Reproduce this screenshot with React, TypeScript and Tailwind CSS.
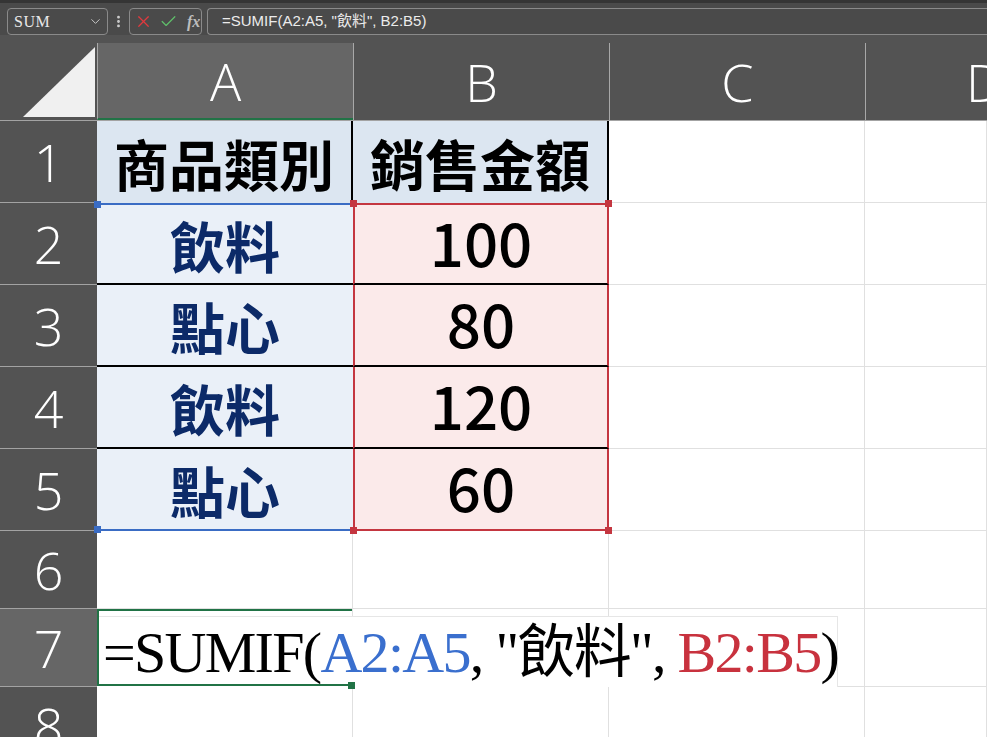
import React from 'react'
import { ChevronDown, EllipsisVertical, X, Check } from 'lucide-react'

const COLS = ['A', 'B', 'C', 'D']
const ROW_H = [82, 82, 82, 82, 82, 78, 78, 78]

const cjk = "font-['Noto_Sans_CJK_TC','Noto_Sans',sans-serif]"
const head = "font-['Open_Sans','Noto_Sans',sans-serif] font-light text-white text-[52px]"

function FormulaBar() {
  return (
    <div className="bg-[#4a4a4a]">
      <div className="h-[3px] bg-[#353535]" />
      <div className="flex items-center h-[32px] pt-[5px] gap-0">
        <div className="ml-[7px] w-[101px] h-[27px] rounded-[4px] border border-[#8a8a8a] flex items-center justify-between pl-[6px] pr-[4px]">
          <span className="font-['Liberation_Serif',serif] text-[16px] text-[#e8e8e8] tracking-[0.5px]">SUM</span>
          <ChevronDown size={15} strokeWidth={1.5} className="text-[#cfcfcf]" />
        </div>
        <div className="w-[21px] flex justify-center">
          <EllipsisVertical size={15} strokeWidth={2.5} className="text-[#d0d0d0]" />
        </div>
        <div className="w-[73px] h-[27px] rounded-[4px] border border-[#8a8a8a] flex items-center gap-[6px] pl-[4px]">
          <X size={19} strokeWidth={1.5} className="text-[#e0393e]" />
          <Check size={19} strokeWidth={1.5} className="text-[#5fbf6a]" />
          <span className="font-['Liberation_Serif',serif] italic font-bold text-[16px] text-[#bdbdbd] ml-[3px]">fx</span>
        </div>
        <div className="ml-[5px] flex-1 h-[27px] rounded-l-[4px] border border-r-0 border-[#8a8a8a] flex items-center pl-[14px]">
          <span className="font-['Liberation_Sans','Noto_Sans_CJK_TC',sans-serif] text-[15px] text-[#ececec]">
            =SUMIF(A2:A5, "飲料", B2:B5)
          </span>
        </div>
      </div>
    </div>
  )
}

function HeaderRow() {
  return (
    <div className="flex h-[86px] bg-[#535353] border-b border-[#a3a3a3]">
      <div className="w-[97px] shrink-0 relative">
        <svg width="97" height="86" className="block">
          <polygon points="23,82 95,82 95,12" fill="#f0f0f0" />
        </svg>
      </div>
      {COLS.map((c, i) => (
        <div key={c} className={`pt-[8px] ${i < 3 ? 'w-[256px] shrink-0' : 'flex-1'}`}>
          <div
            className={`h-full border-l border-[#a8a8a8] flex items-center justify-center ${head} ${
              c === 'A' ? 'bg-[#666666] border-b-2 border-b-[#217346]' : ''
            } ${c === 'D' ? 'justify-start pl-[100px]' : ''}`}
          >
            {c}
          </div>
        </div>
      ))}
    </div>
  )
}

function Square({ cls }: { cls: string }) {
  return <span className={`absolute w-[7px] h-[7px] z-30 ${cls}`} />
}

function Cell({
  w,
  cls = '',
  children,
}: {
  w: string
  cls?: string
  children?: React.ReactNode
}) {
  return (
    <div className={`relative ${w} h-full flex items-center justify-center ${cls}`}>
      {children}
    </div>
  )
}

export default function App() {
  const aVals = ['商品類別', '飲料', '點心', '飲料', '點心']
  const bVals = ['銷售金額', '100', '80', '120', '60']
  const grid = 'border-r border-b border-[#e0e0e0]'

  return (
    <div className="w-[987px] h-[737px] overflow-hidden bg-white">
      <FormulaBar />
      <HeaderRow />

      {ROW_H.map((h, r) => {
        const row = r + 1
        const active = row === 7
        let aCls = grid
        let bCls = grid
        let aText: React.ReactNode = null
        let bText: React.ReactNode = null

        if (row === 1) {
          aCls = 'bg-[#dce6f1] border-r-2 border-r-black'
          bCls = 'bg-[#dce6f1] border-r-2 border-r-black'
          aText = <span className={`${cjk} font-bold text-[55px] text-black`}>{aVals[0]}</span>
          bText = <span className={`${cjk} font-bold text-[55px] text-black`}>{bVals[0]}</span>
        } else if (row <= 5) {
          aCls = `bg-[#eaf0f8] ${row === 2 ? 'border-t-2 border-t-[#3a6cc4]' : ''} ${
            row === 5 ? 'border-b-2 border-b-[#3a6cc4]' : 'border-b-2 border-b-black'
          }`
          bCls = `bg-[#fbeaea] border-l-2 border-r-2 border-[#c43640] ${
            row === 2 ? 'border-t-2 border-t-[#c43640]' : ''
          } ${row === 5 ? 'border-b-2 border-b-[#c43640]' : 'border-b-2 border-b-black'}`
          aText = <span className={`${cjk} font-bold text-[55px] text-[#0c2a68]`}>{aVals[r]}</span>
          bText = (
            <span className={`${cjk} font-medium text-[60px] text-black -mt-[7px]`}>{bVals[r]}</span>
          )
        }

        return (
          <div key={row} className="flex shrink-0" style={{ height: h }}>
            <div
              className={`w-[97px] shrink-0 flex items-center justify-center border-b border-[#a3a3a3] ${head} ${
                active ? 'bg-[#666666]' : 'bg-[#535353]'
              }`}
            >
              {row}
            </div>

            <Cell w="w-[256px] shrink-0" cls={aCls}>
              {aText}
              {row === 2 && <Square cls="-left-[3px] -top-[4px] w-[5px] bg-[#3a6cc4]" />}
              {row === 5 && <Square cls="-left-[3px] -bottom-[4px] w-[5px] bg-[#3a6cc4]" />}
              {active && (
                <>
                  <div className="absolute left-0 top-[7px] w-[741px] h-[71px] bg-white border-t border-r border-[#e6e6e6] z-10 whitespace-nowrap pl-[6px] font-['Liberation_Serif','Noto_Sans_CJK_TC',serif] text-[58px] leading-[71px] tracking-[-1.7px] text-black">
                    =SUMIF(<span className="text-[#3a6fce]">A2:A5</span>, "飲料",{' '}
                    <span className="text-[#c8323e]">B2:B5</span>)
                  </div>
                  <div className="absolute inset-0 border-l-2 border-t-2 border-b-2 border-[#217346] z-20" />
                  <Square cls="-right-[3px] -bottom-[3px] w-[6px] h-[5px] bg-[#217346]" />
                </>
              )}
            </Cell>

            <Cell w="w-[256px] shrink-0" cls={bCls}>
              {bText}
              {row === 2 && (
                <>
                  <Square cls="-left-[5px] -top-[5px] bg-[#c43640]" />
                  <Square cls="-right-[5px] -top-[5px] bg-[#c43640]" />
                </>
              )}
              {row === 5 && (
                <>
                  <Square cls="-left-[5px] -bottom-[5px] bg-[#c43640]" />
                  <Square cls="-right-[5px] -bottom-[5px] bg-[#c43640]" />
                </>
              )}
            </Cell>

            <Cell w="w-[256px] shrink-0" cls={grid} />
            <Cell w="flex-1" cls={grid} />
          </div>
        )
      })}
    </div>
  )
}
